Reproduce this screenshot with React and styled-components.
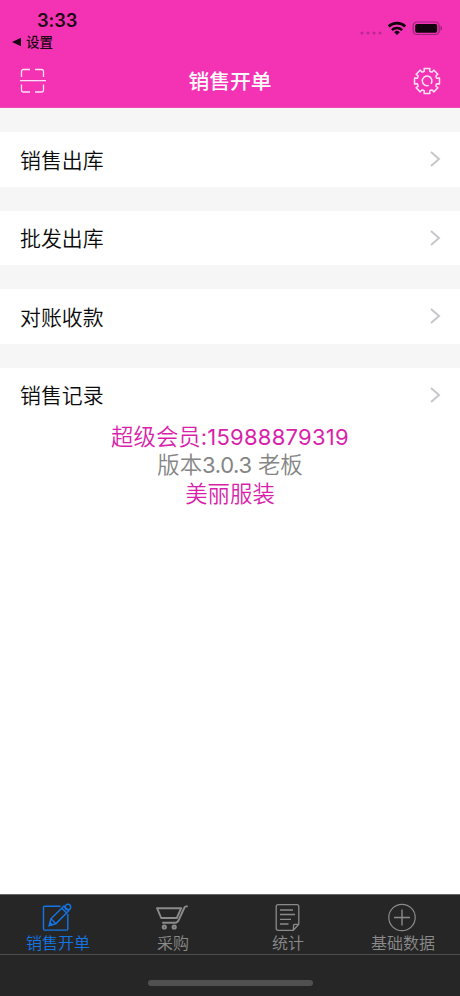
import React from "react";
import styled, { createGlobalStyle } from "styled-components";

const GlobalStyle = createGlobalStyle`
  * { box-sizing: border-box; }
  body {
    margin: 0;
    background: #fff;
    font-family: Inter, "Noto Sans CJK SC", sans-serif;
  }
  svg { display: block; fill: none; }
`;

const Screen = styled.div`
  width: 460px;
  height: 996px;
  display: flex;
  flex-direction: column;
  overflow: hidden;
  background: #fff;
`;

const Header = styled.header`
  height: 108px;
  flex: none;
  background: #f433b4;
  border-bottom: 1px solid #ee4db8;
`;

const StatusBar = styled.div`
  height: 53px;
  display: flex;
  justify-content: space-between;
  color: #1b0613;
`;

const StatusLeft = styled.div`
  padding: 8px 0 0 12px;
`;

const Clock = styled.div`
  padding-left: 25px;
  font-size: 18.3px;
  line-height: 24px;
  font-weight: 600;
  letter-spacing: -0.1px;
`;

const BackLink = styled.div`
  display: flex;
  align-items: center;
  gap: 5px;
  height: 20px;
  font-size: 13.5px;
  line-height: 20px;
  font-weight: 500;
`;

const StatusIcons = styled.div`
  display: flex;
  padding: 20px 18px 0 0;
`;

const NavBar = styled.div`
  height: 55px;
  display: grid;
  grid-template-columns: 1fr auto 1fr;
  align-items: center;
  padding: 0 19px;
`;

const NavTitle = styled.h1`
  margin: 0;
  padding-top: 2px;
  color: #fff;
  font-size: 20.8px;
  line-height: 30px;
  font-weight: 500;
`;

const NavButton = styled.button`
  display: block;
  justify-self: ${(p) => p.$side};
  padding: 0;
  border: 0;
  background: none;
`;

const Menu = styled.nav`
  display: flex;
  flex-direction: column;
  gap: 24px;
  padding-top: 24px;
  background: #f6f6f6;
`;

const MenuRow = styled.div`
  height: 54.5px;
  display: flex;
  align-items: center;
  justify-content: space-between;
  padding: 0 18px 0 20px;
  background: #fff;
  color: #0b0b0b;
`;

const MenuLabel = styled.span`
  padding-top: 3px;
  font-size: 20.9px;
  line-height: 30px;
  font-weight: 350;
`;

const Account = styled.section`
  flex: 1;
  display: flex;
  flex-direction: column;
  align-items: center;
  padding-top: 1px;
`;

const AccountLine = styled.div`
  height: ${(p) => p.$height}px;
  line-height: ${(p) => p.$height}px;
  font-size: 22.4px;
  font-weight: 350;
  white-space: nowrap;
  color: ${(p) => (p.$muted ? "#858585" : "#d91fab")};
`;

const Digits = styled.span`
  font-size: 22px;
  font-weight: 370;
  letter-spacing: ${(p) => p.$spacing || 0}px;
`;

const Footer = styled.footer`
  height: 102px;
  flex: none;
  background: #262626;
  border-top: 1px solid #666;
`;

const Tabs = styled.div`
  height: 60px;
  display: grid;
  grid-template-columns: repeat(4, 1fr);
  border-bottom: 1px solid #4d4d4d;
`;

const Tab = styled.div`
  display: flex;
  flex-direction: column;
  align-items: center;
  padding-top: 7px;
  color: ${(p) => (p.$active ? "#1476e6" : "#8b8b8b")};
`;

const TabIcon = styled.span`
  padding-right: 2px;
`;

const TabLabel = styled.span`
  padding-left: 1px;
  font-size: 16px;
  line-height: 20px;
  font-weight: 350;
`;

const HomeIndicator = styled.div`
  width: 165px;
  height: 6px;
  margin: 25px auto 0;
  border-radius: 3px;
  background: #505050;
`;

const StatusGlyphs = () => (
  <svg width="84" height="18" viewBox="0 0 84 18">
    <g fill="#b82891">
      <circle cx="4" cy="13" r="1.5" />
      <circle cx="10" cy="13" r="1.5" />
      <circle cx="16" cy="13" r="1.5" />
      <circle cx="22" cy="13" r="1.5" />
    </g>
    <g stroke="#13030d" strokeWidth="2.6">
      <path d="M30.7 6.5a12 12 0 0 1 16.6 0" />
      <path d="M33.9 10.1a7.3 7.3 0 0 1 10.2 0" />
    </g>
    <path d="M36.2 12.2a4 4 0 0 1 5.6 0L39 15z" fill="#13030d" />
    <rect x="55.2" y="2" width="26" height="12.5" rx="3.7" stroke="#96267a" strokeWidth="1.2" />
    <rect x="57.2" y="4" width="22" height="8.7" rx="1.8" fill="#13030d" />
    <path d="M83.2 6.3v4" stroke="#96267a" strokeWidth="1.5" />
  </svg>
);

const BackArrow = () => (
  <svg width="9" height="10" viewBox="0 0 9 10">
    <path d="M0 5 9 .8v8.4z" fill="currentColor" />
  </svg>
);

const ScanIcon = () => (
  <svg width="28" height="26" viewBox="0 0 28 26" stroke="#ffe2f5" strokeWidth="1.3">
    <path d="M2.5 9V3.5q0-2 2-2H11M16 1.5h6.5q2 0 2 2V9M2.5 16.5V22q0 2 2 2H11M16 24h6.5q2 0 2-2v-5.5M1 12.7h26" />
  </svg>
);

const GEAR_TEETH = 8;
const gearPath = Array.from({ length: GEAR_TEETH }, (_, i) => {
  const point = (radius, degrees) => {
    const angle = ((i * 360) / GEAR_TEETH + degrees - 90) * (Math.PI / 180);
    return `${(14 + radius * Math.cos(angle)).toFixed(2)} ${(14 + radius * Math.sin(angle)).toFixed(2)}`;
  };
  return `${i ? "L" : "M"}${point(10.3, -15)}L${point(12.8, -13)}L${point(12.8, 13)}L${point(10.3, 15)}Q${point(9.5, 22.5)} ${point(10.3, 30)}`;
}).join("") + "Z";

const GearIcon = () => (
  <svg width="28" height="28" viewBox="0 0 28 28" stroke="#ffe2f5" strokeWidth="1.5" strokeLinejoin="round">
    <path d={gearPath} />
    <path d="M15.8 18.4A4.8 4.8 0 1 1 18 16.7" />
  </svg>
);

const Chevron = () => (
  <svg width="14" height="18" viewBox="0 0 14 18">
    <path d="m3 2 8 7-8 7" stroke="#c7c7cb" strokeWidth="2" />
  </svg>
);

const EditIcon = () => (
  <svg width="32" height="31" viewBox="0 0 32 31" stroke="currentColor" strokeWidth="1.4">
    <path d="M19.5 4.3H3.5q-1 0-1 1v21.8q0 1 1 1h22.3q1 0 1-1V12" />
    <path d="m8.2 23.6 1.7-6.8L23 4l4.8 4.7-13 13.1zM10 16.8l4.8 4.9M20.8 6.2l4.8 4.7" />
    <circle cx="26.9" cy="5.1" r="2.8" />
    <path d="m8.3 23.5 3-.8-2.2-2.2z" fill="currentColor" />
  </svg>
);

const CartIcon = () => (
  <svg width="34" height="31" viewBox="0 0 34 31" stroke="currentColor">
    <path d="M32.8 4.4H31q-1 0-1.5 1.1L23.8 17.8q-1.3 2.9-3.6 2.9H7.2M2 6.2h24.2l-4.4 9.8H6.2z" strokeWidth="1.9" strokeLinejoin="round" />
    <circle cx="9.3" cy="25" r="1.6" strokeWidth="2" />
    <circle cx="19.2" cy="25" r="1.6" strokeWidth="2" />
  </svg>
);

const ReportIcon = () => (
  <svg width="28" height="31" viewBox="0 0 28 31" stroke="currentColor" strokeWidth="1.3">
    <path d="M20.3 28.3H5.2q-2 0-2-2V4.7q0-2 2-2h18.6q2 0 2 2v17.6zl.3-5q0-1 1-1h4.2M7 8h13M7 12.5h15M7 17.3h11M7 22h8.5" />
  </svg>
);

const PlusIcon = () => (
  <svg width="30" height="31" viewBox="0 0 30 31" stroke="currentColor" strokeWidth="1.2">
    <circle cx="15" cy="15.5" r="13.2" />
    <path d="M7 15.5h16M15 7.5v16" strokeWidth="1.4" />
  </svg>
);

const menuItems = ["销售出库", "批发出库", "对账收款", "销售记录"];

const tabs = [
  { label: "销售开单", Icon: EditIcon, active: true },
  { label: "采购", Icon: CartIcon },
  { label: "统计", Icon: ReportIcon },
  { label: "基础数据", Icon: PlusIcon },
];

export default function App() {
  return (
    <Screen>
      <GlobalStyle />
      <Header>
        <StatusBar>
          <StatusLeft>
            <Clock>3:33</Clock>
            <BackLink><BackArrow />设置</BackLink>
          </StatusLeft>
          <StatusIcons><StatusGlyphs /></StatusIcons>
        </StatusBar>
        <NavBar>
          <NavButton $side="start" aria-label="扫描"><ScanIcon /></NavButton>
          <NavTitle>销售开单</NavTitle>
          <NavButton $side="end" aria-label="设置"><GearIcon /></NavButton>
        </NavBar>
      </Header>
      <Menu>
        {menuItems.map((label) => (
          <MenuRow key={label}><MenuLabel>{label}</MenuLabel><Chevron /></MenuRow>
        ))}
      </Menu>
      <Account>
        <AccountLine $height={28}>超级会员<Digits $spacing={0.25}>:15988879319</Digits></AccountLine>
        <AccountLine $height={28} $muted>版本<Digits $spacing={-0.4}>3.0.3</Digits> 老板</AccountLine>
        <AccountLine $height={30}>美丽服装</AccountLine>
      </Account>
      <Footer>
        <Tabs>
          {tabs.map(({ label, Icon, active }) => (
            <Tab key={label} $active={active}>
              <TabIcon><Icon /></TabIcon>
              <TabLabel>{label}</TabLabel>
            </Tab>
          ))}
        </Tabs>
        <HomeIndicator />
      </Footer>
    </Screen>
  );
}
